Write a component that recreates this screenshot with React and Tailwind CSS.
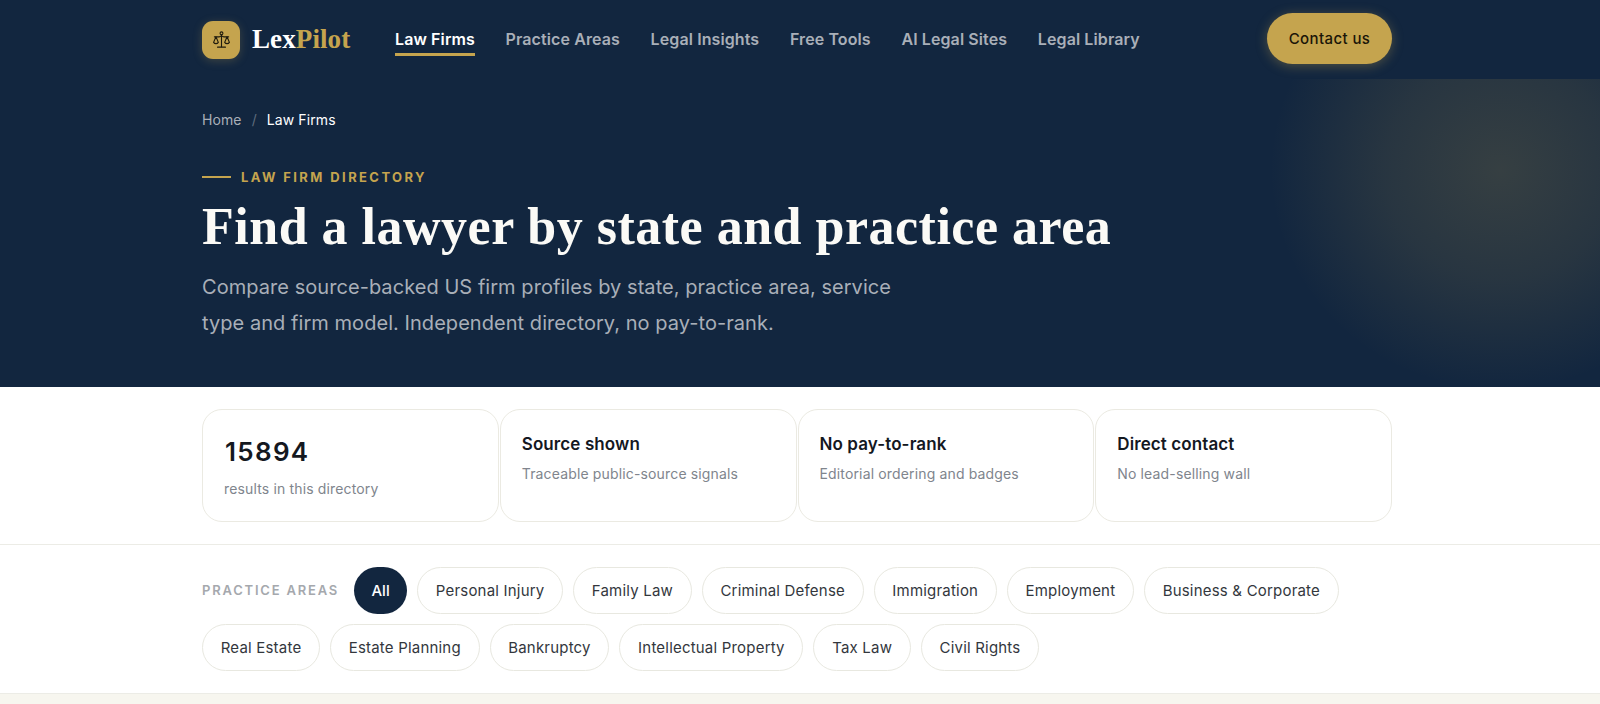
const navLinks = ['Practice Areas', 'Legal Insights', 'Free Tools', 'AI Legal Sites', 'Legal Library'];

const stats = [
  { title: 'Source shown', text: 'Traceable public-source signals' },
  { title: 'No pay-to-rank', text: 'Editorial ordering and badges' },
  { title: 'Direct contact', text: 'No lead-selling wall' },
];

const firstRow = ['Personal Injury', 'Family Law', 'Criminal Defense', 'Immigration', 'Employment', 'Business & Corporate'];
const secondRow = ['Real Estate', 'Estate Planning', 'Bankruptcy', 'Intellectual Property', 'Tax Law', 'Civil Rights'];

function ScalesIcon() {
  return (
    <svg width="19" height="20" viewBox="0 0 24 24" fill="none" stroke="#1f1b0e" strokeWidth="1.4" strokeLinecap="round" strokeLinejoin="round">
      <circle cx="12" cy="3.5" r="1.8" />
      <path d="M12 5.500v15" />
      <path d="M7 21h10" />
      <path d="M3 8h6c1 0 2-.6 3-1.500 1 .9 2 1.500 3 1.500h6" />
      <path d="M5 8l-3 7c.7 1 1.800 1.600 3 1.600S7.300 16 8 15L5 8Z" />
      <path d="M19 8l-3 7c.7 1 1.800 1.600 3 1.600S21.300 16 22 15l-3-7Z" />
    </svg>
  );
}

function Pill({ label }) {
  return (
    <button className="h-[47px] px-[17.7px] pt-[1px] rounded-full border border-[#e8e8e0] bg-white text-[15px] tracking-[0.2px] text-[#33373d]">
      {label}
    </button>
  );
}

export default function App() {
  return (
    <div className="w-full h-[704px] overflow-hidden bg-white font-['Inter',sans-serif]">
      {/* nav */}
      <header className="h-[79px] bg-[#12263f] pl-[202px]">
        <div className="w-[1190px] h-full flex items-center">
          <div className="flex items-center gap-3 w-[193px]">
            <div className="w-[38px] h-[38px] rounded-[11px] bg-[#c5a44e] flex items-center justify-center shadow-[0_2px_10px_rgba(197,164,78,0.25)]">
              <ScalesIcon />
            </div>
            <span className="font-['Liberation_Serif',serif] font-bold text-[27px] tracking-[0.1px] leading-none text-white">
              Lex<span className="text-[#c5a44e]">Pilot</span>
            </span>
          </div>
          <nav className="flex items-center gap-[30.7px] flex-1 mb-[1px] text-[16px] font-semibold tracking-[0.1px] text-[#a9afb8]">
            <span className="relative text-white">
              Law Firms
              <span className="absolute left-0 right-0 -bottom-[5px] h-[3px] bg-[#c5a44e]"></span>
            </span>
            {navLinks.map((link) => (
              <span key={link}>{link}</span>
            ))}
          </nav>
          <button className="w-[125px] h-[51px] mb-[2px] pt-[1px] rounded-full bg-[#c5a44e] text-[15px] font-medium tracking-[0.4px] text-[#1a1508] shadow-[0_2px_12px_rgba(197,164,78,0.35)]">
            Contact us
          </button>
        </div>
      </header>

      {/* hero */}
      <section className="relative h-[308px] bg-[#12263f] overflow-hidden pl-[202px]">
        <div className="absolute right-[-130px] top-[-129px] w-[460px] h-[440px] bg-[radial-gradient(closest-side,rgba(197,164,78,0.2),rgba(197,164,78,0.12)_50%,rgba(197,164,78,0))]"></div>
        <div className="relative w-[1190px] pt-[32px]">
          <div className="flex items-center text-[14px] leading-[18px] tracking-[0.1px]">
            <span className="text-[#a9afb8]">Home</span>
            <span className="mx-[10px] text-[#5f6c7d]">/</span>
            <span className="text-white">Law Firms</span>
          </div>
          <div className="mt-[40px] flex items-center gap-[10px]">
            <span className="w-[29px] h-[2px] bg-[#c5a44e]"></span>
            <span className="text-[13px] leading-4 font-bold tracking-[2.4px] text-[#c5a44e]">LAW FIRM DIRECTORY</span>
          </div>
          <h1 className="mt-[12px] font-['Liberation_Serif',serif] font-bold text-[52px] tracking-[0.5px] leading-[60px] text-[#fbfaf6]">
            Find a lawyer by state and practice area
          </h1>
          <p className="mt-[12px] w-[720px] text-[20px] leading-[36px] tracking-[0.05px] text-[#a9afb8]">
            Compare source-backed US firm profiles by state, practice area, service type and firm model. Independent directory, no pay-to-rank.
          </p>
        </div>
      </section>

      {/* stats */}
      <section className="h-[158px] border-b border-[#ecece6] pl-[202px] pt-[22px]">
        <div className="w-[1190px] h-[113px] grid grid-cols-4 gap-[1px]">
          <div className="rounded-[20px] border border-[#ebeae2] px-[21px] pt-[26px]">
            <div className="ml-[1px] text-[26px] leading-[32px] font-semibold tracking-[1.3px] text-[#14181f]">15894</div>
            <div className="mt-[11px] text-[14px] leading-5 tracking-[0.15px] text-[#80858d]">results in this directory</div>
          </div>
          {stats.map((s) => (
            <div key={s.title} className="rounded-[20px] border border-[#ebeae2] px-[21px] pt-[22px]">
              <div className="text-[17px] leading-[24px] font-semibold tracking-[0.1px] text-[#14181f]">{s.title}</div>
              <div className="mt-[8px] text-[14px] leading-5 tracking-[0.15px] text-[#80858d]">{s.text}</div>
            </div>
          ))}
        </div>
      </section>

      {/* practice area filters */}
      <section className="h-[149px] border-b border-[#ecece6] pl-[202px] pt-[22px]">
        <div className="w-[1190px] flex flex-col gap-[10px]">
          <div className="flex items-center gap-[10px]">
            <span className="mr-[5px] pt-[1px] text-[13px] font-semibold tracking-[1.8px] text-[#a5a8ad]">PRACTICE AREAS</span>
            <button className="w-[53px] h-[47px] pt-[1px] rounded-full bg-[#12263f] text-[15px] font-medium text-white">All</button>
            {firstRow.map((p) => (
              <Pill key={p} label={p} />
            ))}
          </div>
          <div className="flex items-center gap-[10px]">
            {secondRow.map((p) => (
              <Pill key={p} label={p} />
            ))}
          </div>
        </div>
      </section>

      <div className="h-[10px] bg-[#f7f6ef]"></div>
    </div>
  );
}
